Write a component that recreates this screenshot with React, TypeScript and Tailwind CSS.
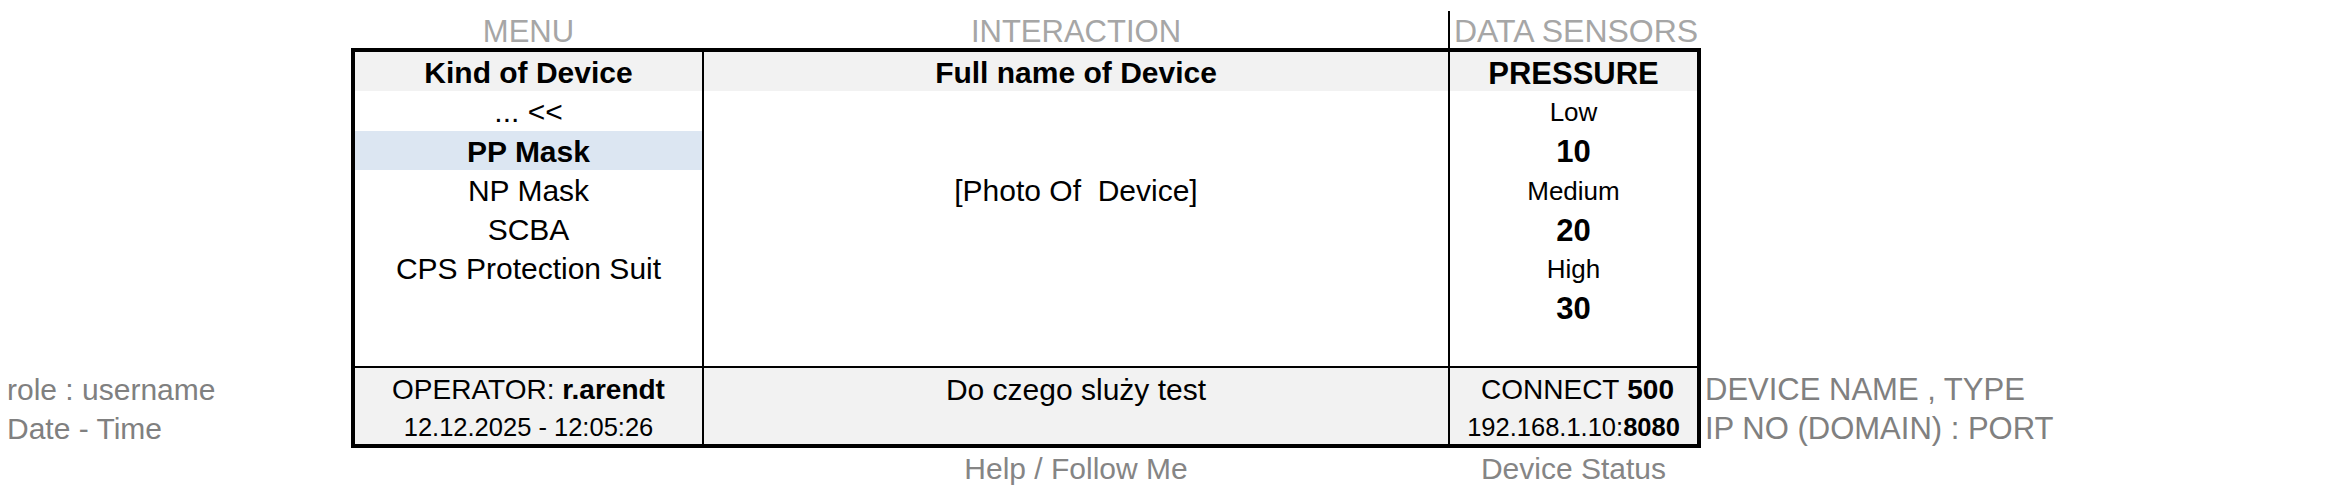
import React from "react";

const F = { fontFamily: '"Liberation Sans", Arial, sans-serif' };
const C = "flex items-center justify-center pt-[3px]";

export default function App() {
  return (
    <div className="w-[2339px] h-[496px] bg-white text-black overflow-hidden" style={F}>
      <div className="flex">
        {/* left labels */}
        <div className="w-[351px] shrink-0 pt-[368px] pl-[7px] text-[30px] text-[#808080] leading-none">
          <div className="h-[40px] flex items-center pt-[3px]">role : username</div>
          <div className="h-[38px] flex items-center pt-[3px]">Date - Time</div>
        </div>

        {/* center: top labels, table, bottom labels */}
        <div className="w-[1350px] shrink-0 flex flex-col">
          <div className="h-[48px] flex px-[4px] items-end text-[31px] leading-none text-[#a6a6a6]">
            <div className="w-[347px] h-[37px] flex items-center justify-center pt-[3px]">MENU</div>
            <div className="w-[2px]" />
            <div className="w-[744px] h-[37px] flex items-center justify-center pt-[3px]">INTERACTION</div>
            <div className="w-[2px] h-[37px] bg-black" />
            <div className="w-[247px] h-[37px] flex items-center pl-[4px] pt-[3px] whitespace-nowrap text-[32px]">
              DATA SENSORS
            </div>
          </div>

          <div className="border-[4px] border-black flex flex-col">
            {/* body */}
            <div className="flex h-[314px]">
              <div className="w-[347px] grid grid-rows-8 text-[30px] leading-none">
                <div className={`bg-[#f2f2f2] font-bold ${C}`}>Kind of Device</div>
                <div className={C}>... &lt;&lt;</div>
                <div className={`bg-[#dce6f2] font-bold ${C}`}>PP Mask</div>
                <div className={C}>NP Mask</div>
                <div className={C}>SCBA</div>
                <div className={C}>CPS Protection Suit</div>
                <div />
                <div />
              </div>
              <div className="w-[2px] bg-black" />
              <div className="w-[744px] grid grid-rows-8 text-[30px] leading-none">
                <div className={`bg-[#f2f2f2] font-bold ${C}`}>Full name of Device</div>
                <div />
                <div />
                <div className={`whitespace-pre ${C}`}>[Photo Of  Device]</div>
                <div />
                <div />
                <div />
                <div />
              </div>
              <div className="w-[2px] bg-black" />
              <div className="w-[247px] grid grid-rows-8 leading-none">
                <div className={`bg-[#f2f2f2] font-bold text-[31px] ${C}`}>PRESSURE</div>
                <div className={`text-[26px] ${C}`}>Low</div>
                <div className={`font-bold text-[31px] ${C}`}>10</div>
                <div className={`text-[26px] ${C}`}>Medium</div>
                <div className={`font-bold text-[31px] ${C}`}>20</div>
                <div className={`text-[26px] ${C}`}>High</div>
                <div className={`font-bold text-[31px] ${C}`}>30</div>
                <div />
              </div>
            </div>
            <div className="h-[2px] bg-black" />
            {/* footer */}
            <div className="flex h-[76px] bg-[#f2f2f2] leading-none">
              <div className="w-[347px] flex flex-col">
                <div className={`h-[40px] text-[28px] ${C}`}>
                  OPERATOR:&nbsp;<span className="font-bold">r.arendt</span>
                </div>
                <div className={`h-[36px] text-[25.5px] ${C}`}>12.12.2025 - 12:05:26</div>
              </div>
              <div className="w-[2px] bg-black" />
              <div className="w-[744px] flex flex-col">
                <div className={`h-[40px] text-[30px] ${C}`}>Do czego sluży test</div>
              </div>
              <div className="w-[2px] bg-black" />
              <div className="w-[247px] flex flex-col">
                <div className={`h-[40px] text-[28px] whitespace-nowrap pl-[8px] ${C}`}>
                  CONNECT&nbsp;<span className="font-bold">500</span>
                </div>
                <div className={`h-[36px] text-[25.5px] whitespace-nowrap ${C}`}>
                  192.168.1.10:<span className="font-bold">8080</span>
                </div>
              </div>
            </div>
          </div>

          <div className="h-[38px] flex px-[4px] text-[30px] leading-none text-[#858585]">
            <div className="w-[347px]" />
            <div className="w-[2px]" />
            <div className={`w-[744px] ${C}`}>Help / Follow Me</div>
            <div className="w-[2px]" />
            <div className={`w-[247px] whitespace-nowrap ${C}`}>Device Status</div>
          </div>
        </div>

        {/* right labels */}
        <div className="pt-[368px] pl-[4px] text-[31px] text-[#808080] leading-none whitespace-nowrap">
          <div className="h-[40px] flex items-center pt-[3px]">DEVICE NAME , TYPE</div>
          <div className="h-[38px] flex items-center pt-[3px]">IP NO (DOMAIN) : PORT</div>
        </div>
      </div>
    </div>
  );
}
